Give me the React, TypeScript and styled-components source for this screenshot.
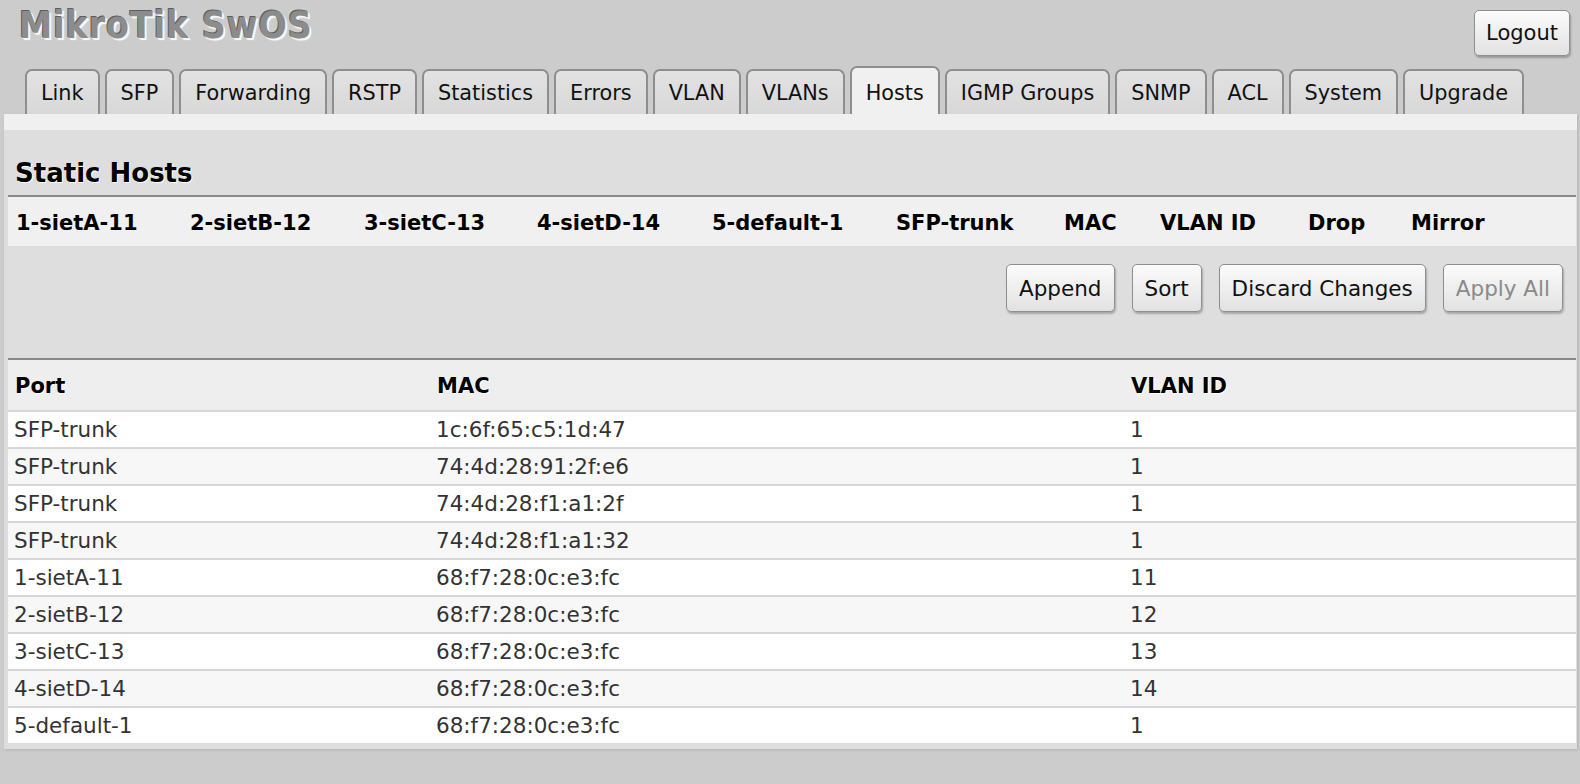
import React from 'react';
import styled, { createGlobalStyle } from 'styled-components';

const GlobalStyle = createGlobalStyle`
  html, body {
    margin: 0;
    padding: 0;
    background: #cccccc;
    font-family: "DejaVu Sans", Verdana, sans-serif;
    font-size: 21px;
    color: #000;
  }
`;

const Page = styled.div`
  width: 1580px;
  min-height: 784px;
  background: #cccccc;
`;

const Header = styled.div`
  height: 66px;
  display: flex;
  justify-content: space-between;
  align-items: flex-start;
  padding: 0 10px 0 19px;
`;

const Title = styled.div`
  font-family: "DejaVu Sans Condensed", "DejaVu Sans", sans-serif;
  font-weight: bold;
  font-size: 37px;
  letter-spacing: 1px;
  line-height: 44px;
  margin-top: 4px;
  color: #8c8c8c;
  text-shadow: -1px -1px 0 #5e5e5e, 1px 1px 0 #f4f4f4, 2px 2px 1px #ffffff;
`;

const Button = styled.button<{ disabled?: boolean }>`
  font-family: "DejaVu Sans", Verdana, sans-serif;
  font-size: 21.5px;
  height: 48px;
  padding: 0 12px;
  border: 1px solid #8f8f8f;
  border-radius: 5px;
  background: linear-gradient(#fbfbfb, #e2e2e2);
  box-shadow: 1px 2px 2px rgba(0, 0, 0, 0.25);
  color: ${(p) => (p.disabled ? '#8a8a8a' : '#111')};
  cursor: ${(p) => (p.disabled ? 'default' : 'pointer')};
`;

const LogoutButton = styled(Button)`
  margin-top: 10px;
  height: 46px;
  padding: 0 11px;
  font-size: 21px;
`;

const TabBar = styled.div`
  height: 48px;
  display: flex;
  align-items: flex-end;
  gap: 5px;
  padding-left: 25px;
`;

const Tab = styled.div<{ $active?: boolean }>`
  height: ${(p) => (p.$active ? '48px' : '45px')};
  box-sizing: border-box;
  display: flex;
  align-items: center;
  padding: ${(p) => (p.$active ? '3px 14px 0' : '0 14px')};
  border: 2px solid #8e8e8e;
  border-bottom: none;
  border-radius: 7px 7px 0 0;
  background: ${(p) => (p.$active ? '#f0f0f0' : 'linear-gradient(#e2e2e2, #d8d8d8)')};
  color: #111;
  font-size: 20.8px;
  white-space: nowrap;
`;

const Panel = styled.div`
  margin: 0 3px 0 4px;
  background: #dedede;
  padding-bottom: 6px;
  box-shadow: 1px 1px 3px rgba(0, 0, 0, 0.12);
`;

const Strip = styled.div`
  height: 16px;
  background: #f0f0f0;
`;

const Inner = styled.div`
  padding: 0 1px 0 4px;
`;

const Section = styled.h2`
  margin: 0;
  height: 37px;
  padding-top: 28px;
  box-sizing: content-box;
  padding-left: 7px;
  font-size: 26px;
  font-weight: bold;
  line-height: 30px;
  border-bottom: 2px solid #888;
  text-shadow: 1px 1px 0 #fff;
`;

const FieldRow = styled.div`
  height: 49px;
  padding-top: 2px;
  box-sizing: border-box;
  background: #f0f0f0;
  display: grid;
  grid-template-columns: 174px 174px 173px 175px 184px 168px 96px 148px 103px auto;
  align-items: center;
  padding-left: 8px;
  font-weight: bold;
  white-space: nowrap;
`;

const Actions = styled.div`
  height: 114px;
  box-sizing: border-box;
  padding: 18px 13px 0 0;
  display: flex;
  justify-content: flex-end;
  align-items: flex-start;
  gap: 17px;
  border-bottom: 2px solid #888;
`;

const Table = styled.div`
  display: flex;
  flex-direction: column;
  font-size: 21.5px;
`;

const HeadRow = styled.div`
  height: 50px;
  padding-top: 2px;
  box-sizing: border-box;
  display: grid;
  grid-template-columns: 422px 694px 1fr;
  align-items: center;
  background: #eeeeee;
  font-weight: bold;
  font-size: 21px;
  text-shadow: 1px 1px 0 #fff;
`;

const Row = styled.div<{ $odd: boolean }>`
  height: 37px;
  box-sizing: border-box;
  display: grid;
  grid-template-columns: 422px 694px 1fr;
  align-items: center;
  border-top: 2px solid #d6d6d6;
  background: ${(p) => (p.$odd ? '#f7f7f7' : '#ffffff')};
  color: #333;
`;

const Cell = styled.div<{ $head?: boolean }>`
  padding-left: ${(p) => (p.$head ? '7px' : '6px')};
  white-space: nowrap;
`;

const tabs = ['Link', 'SFP', 'Forwarding', 'RSTP', 'Statistics', 'Errors', 'VLAN', 'VLANs', 'Hosts', 'IGMP Groups', 'SNMP', 'ACL', 'System', 'Upgrade'];

const fields = ['1-sietA-11', '2-sietB-12', '3-sietC-13', '4-sietD-14', '5-default-1', 'SFP-trunk', 'MAC', 'VLAN ID', 'Drop', 'Mirror'];

const hosts = [
  ['SFP-trunk', '1c:6f:65:c5:1d:47', '1'],
  ['SFP-trunk', '74:4d:28:91:2f:e6', '1'],
  ['SFP-trunk', '74:4d:28:f1:a1:2f', '1'],
  ['SFP-trunk', '74:4d:28:f1:a1:32', '1'],
  ['1-sietA-11', '68:f7:28:0c:e3:fc', '11'],
  ['2-sietB-12', '68:f7:28:0c:e3:fc', '12'],
  ['3-sietC-13', '68:f7:28:0c:e3:fc', '13'],
  ['4-sietD-14', '68:f7:28:0c:e3:fc', '14'],
  ['5-default-1', '68:f7:28:0c:e3:fc', '1'],
];

const App: React.FC = () => {
  return (
    <Page>
      <GlobalStyle />
      <Header>
        <Title>MikroTik SwOS</Title>
        <LogoutButton>Logout</LogoutButton>
      </Header>
      <TabBar>
        {tabs.map((t) => (
          <Tab key={t} $active={t === 'Hosts'}>{t}</Tab>
        ))}
      </TabBar>
      <Panel>
        <Strip />
        <Inner>
          <Section>Static Hosts</Section>
          <FieldRow>
            {fields.map((f) => (
              <span key={f}>{f}</span>
            ))}
          </FieldRow>
          <Actions>
            <Button>Append</Button>
            <Button>Sort</Button>
            <Button>Discard Changes</Button>
            <Button disabled>Apply All</Button>
          </Actions>
          <Table>
            <HeadRow>
              <Cell $head>Port</Cell>
              <Cell $head>MAC</Cell>
              <Cell $head>VLAN ID</Cell>
            </HeadRow>
            {hosts.map((h, i) => (
              <Row key={i} $odd={i % 2 === 1}>
                <Cell>{h[0]}</Cell>
                <Cell>{h[1]}</Cell>
                <Cell>{h[2]}</Cell>
              </Row>
            ))}
          </Table>
        </Inner>
      </Panel>
    </Page>
  );
};

export default App;
